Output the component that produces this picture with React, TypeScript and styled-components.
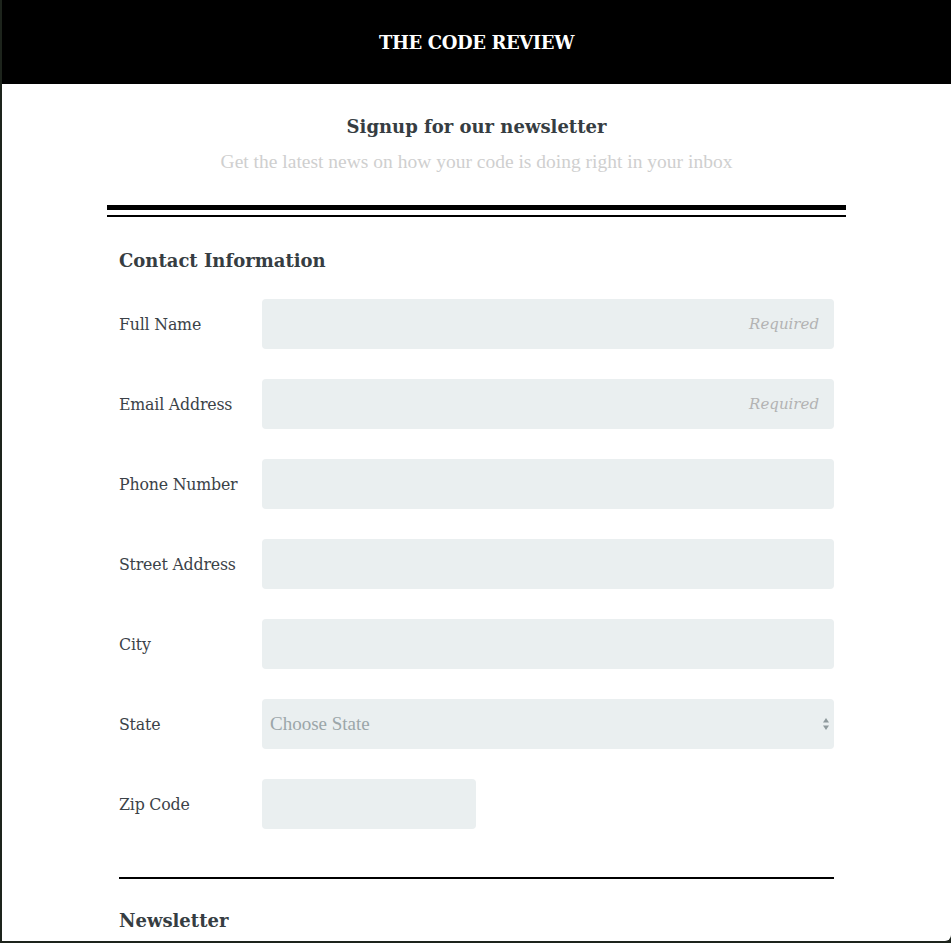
import React from "react";
import styled, { createGlobalStyle } from "styled-components";

const GlobalStyle = createGlobalStyle`
  html, body { margin: 0; padding: 0; }
  body {
    background: #1d241c;
    font-family: "DejaVu Serif", "Liberation Serif", serif;
    color: #3b4248;
  }
`;

const Page = styled.div`
  margin-left: 2px;
  height: 941px;
  background: #fff;
  border-bottom-right-radius: 6px;
  overflow: hidden;
`;

const TopBar = styled.header`
  height: 84px;
  background: #000;
  display: flex;
  align-items: center;
  justify-content: center;
`;

const Brand = styled.h1`
  margin: 0;
  color: #fff;
  font-family: "DejaVu Serif", serif;
  font-weight: 700;
  font-size: 18px;
  letter-spacing: -0.4px;
`;

const IntroWrap = styled.div`
  padding-top: 30px;
  text-align: center;
`;

const Title = styled.h2`
  margin: 0;
  font-size: 18px;
  font-weight: 700;
  color: #363d42;
  line-height: 26px;
`;

const Subtitle = styled.p`
  margin: 11px 0 0;
  line-height: 22px;
  color: #cfcfcf;
  font-family: "Liberation Serif", serif;
  font-size: 19.5px;
`;

const Card = styled.main`
  width: 739px;
  margin: 32px auto 0;
`;

const Divider = styled.div`
  display: flex;
  flex-direction: column;
  gap: 5px;
`;

const Rule = styled.div<{ $h: number }>`
  height: ${(p) => p.$h}px;
  background: #000;
`;

const Section = styled.section<{ $top: number }>`
  padding: ${(p) => p.$top}px 12px 0;
`;

const SectionTitle = styled.h3`
  margin: 0;
  font-size: 18px;
  font-weight: 700;
  line-height: 26px;
  color: #363d42;
`;

const Fields = styled.div`
  display: flex;
  flex-direction: column;
  gap: 30px;
`;

const Row = styled.div`
  display: grid;
  grid-template-columns: 143px 1fr;
  align-items: center;
`;

const Label = styled.label`
  font-size: 15.8px;
  color: #3b4248;
  letter-spacing: -0.2px;
`;

const Input = styled.input<{ $w?: number }>`
  box-sizing: border-box;
  height: 50px;
  width: ${(p) => (p.$w ? `${p.$w}px` : "100%")};
  border: none;
  border-radius: 4px;
  background: #eaeff0;
  padding: 0 15px;
  font-family: "DejaVu Serif", serif;
  font-size: 15px;
  text-align: right;
  outline: none;
  &::placeholder {
    color: #b3b3b3;
    font-style: italic;
  }
`;

const SelectBox = styled.div`
  position: relative;
  height: 50px;
  border-radius: 4px;
  background: #eaeff0;
  display: flex;
  align-items: center;
  padding: 0 8px;
  color: #9ba6a9;
  font-family: "Liberation Serif", serif;
  font-size: 19px;
`;

const Arrows = styled.svg`
  position: absolute;
  right: 4px;
  top: 50%;
  transform: translateY(-50%);
`;

const Hr = styled.div`
  height: 2px;
  background: #000;
`;

const App: React.FC = () => {
  return (
    <>
      <GlobalStyle />
      <Page>
        <TopBar>
          <Brand>THE CODE REVIEW</Brand>
        </TopBar>
        <IntroWrap>
          <Title>Signup for our newsletter</Title>
          <Subtitle>Get the latest news on how your code is doing right in your inbox</Subtitle>
        </IntroWrap>
        <Card>
          <Divider>
            <Rule $h={5} />
            <Rule $h={2} />
          </Divider>
          <Section $top={31}>
            <SectionTitle>Contact Information</SectionTitle>
          </Section>
          <Section $top={25}>
            <Fields>
              <Row>
                <Label>Full Name</Label>
                <Input placeholder="Required" />
              </Row>
              <Row>
                <Label>Email Address</Label>
                <Input placeholder="Required" />
              </Row>
              <Row>
                <Label>Phone Number</Label>
                <Input />
              </Row>
              <Row>
                <Label>Street Address</Label>
                <Input />
              </Row>
              <Row>
                <Label>City</Label>
                <Input />
              </Row>
              <Row>
                <Label>State</Label>
                <SelectBox>
                  Choose State
                  <Arrows width="8" height="14" viewBox="0 0 8 14">
                    <path d="M4 1 L7 5.5 L1 5.5 Z" fill="#8f9a9d" />
                    <path d="M4 13 L7 8.5 L1 8.5 Z" fill="#8f9a9d" />
                  </Arrows>
                </SelectBox>
              </Row>
              <Row>
                <Label>Zip Code</Label>
                <Input $w={214} />
              </Row>
            </Fields>
          </Section>
          <Section $top={48}>
            <Hr />
          </Section>
          <Section $top={29}>
            <SectionTitle>Newsletter</SectionTitle>
          </Section>
        </Card>
      </Page>
    </>
  );
};

export default App;
